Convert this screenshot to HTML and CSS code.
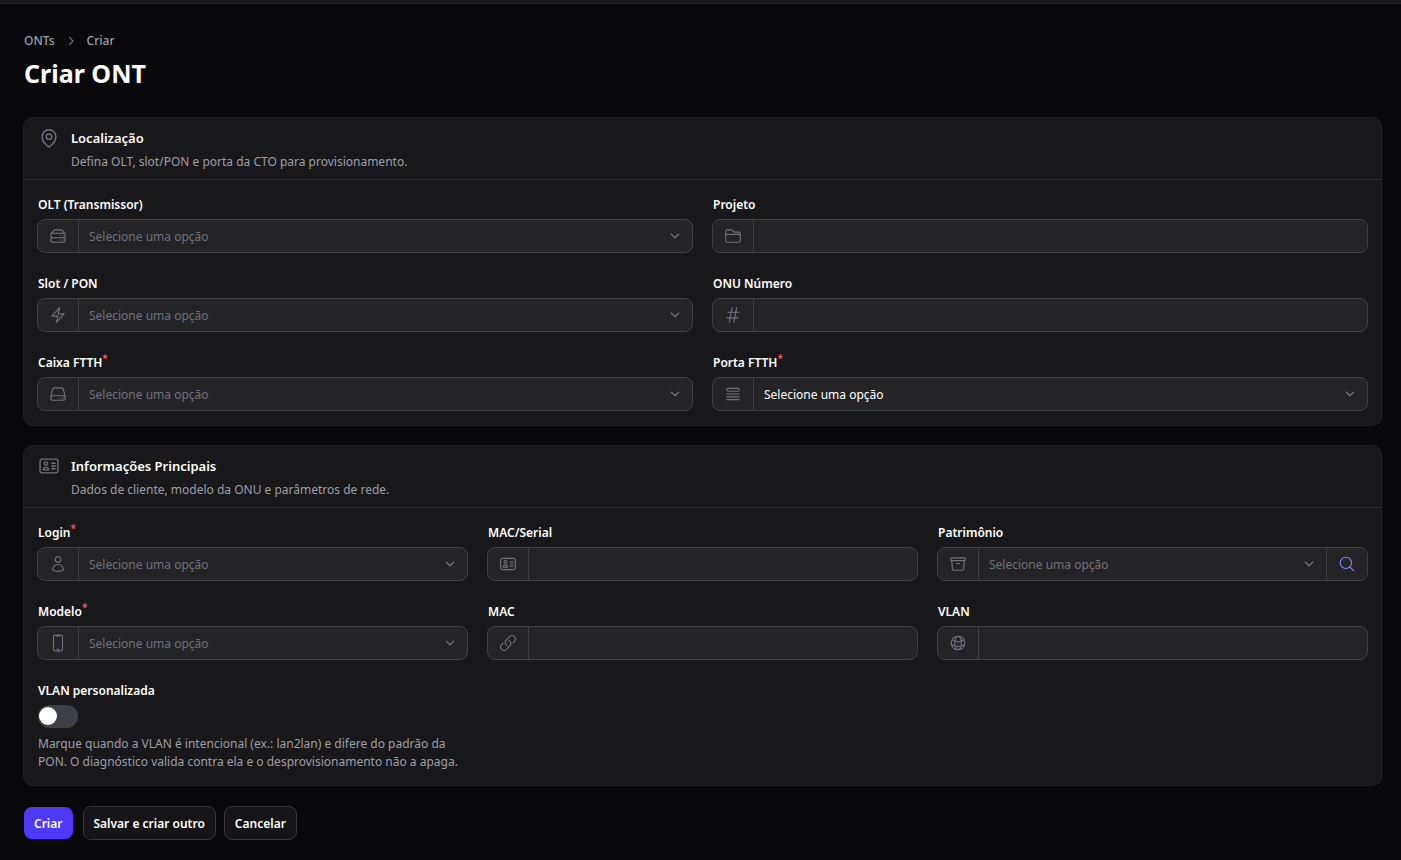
FILE: index.html
```
<!doctype html>
<html lang="pt-BR">
<head>
<meta charset="utf-8">
<meta name="viewport" content="width=device-width,initial-scale=1">
<title>Criar ONT</title>
<link rel="stylesheet" href="styles.css">
</head>
<body>
<div class="topbar"></div>
<main class="page">
  <header class="page-header">
    <nav class="breadcrumbs">
      <a href="#">ONTs</a>
      <svg class="icon icon-sep" viewBox="0 0 20 20"><path d="m8 5.500 4.500 4.500-4.500 4.500"/></svg>
      <a href="#">Criar</a>
    </nav>
    <h1>Criar ONT</h1>
  </header>

  <form id="form-ont">
    <section class="card">
      <header class="card-header">
        <svg class="icon icon-lg" viewBox="0 0 24 24"><path d="M15 10.5a3 3 0 1 1-6 0 3 3 0 0 1 6 0Z"/><path d="M19.5 10.5c0 7.142-7.5 11.25-7.5 11.25S4.5 17.642 4.5 10.5a7.5 7.5 0 1 1 15 0Z"/></svg>
        <div>
          <h2>Localização</h2>
          <p>Defina OLT, slot/PON e porta da CTO para provisionamento.</p>
        </div>
      </header>
      <div class="card-body cols-2">
        <div class="field">
          <label for="olt">OLT (Transmissor)</label>
          <div class="control">
            <span class="prefix"><svg class="icon" viewBox="0 0 24 24"><path d="M5.25 14.25h13.5m-13.5 0a3 3 0 0 1-3-3m3 3a3 3 0 1 0 0 6h13.5a3 3 0 1 0 0-6m-16.5-3a3 3 0 0 1 3-3h13.5a3 3 0 0 1 3 3m-19.5 0a4.5 4.5 0 0 1 .9-2.7L5.737 5.1a3.375 3.375 0 0 1 2.7-1.35h7.126c1.062 0 2.062.5 2.7 1.35l2.587 3.45a4.5 4.5 0 0 1 .9 2.7m0 0a3 3 0 0 1-3 3m0 3h.008v.008h-.008v-.008Zm0-6h.008v.008h-.008v-.008Zm-3 6h.008v.008h-.008v-.008Zm0-6h.008v.008h-.008v-.008Z"/></svg></span>
            <select id="olt" class="empty"><option>Selecione uma opção</option></select>
          </div>
        </div>
        <div class="field">
          <label for="projeto">Projeto</label>
          <div class="control">
            <span class="prefix"><svg class="icon" viewBox="0 0 24 24"><path d="M2.25 12.75V12A2.25 2.25 0 0 1 4.5 9.75h15A2.25 2.25 0 0 1 21.75 12v.75m-8.69-6.44-2.12-2.12a1.5 1.5 0 0 0-1.061-.44H4.5A2.25 2.25 0 0 0 2.25 6v12a2.25 2.25 0 0 0 2.25 2.25h15A2.25 2.25 0 0 0 21.75 18V9a2.25 2.25 0 0 0-2.25-2.25h-5.379a1.5 1.5 0 0 1-1.06-.44Z"/></svg></span>
            <input type="text" id="projeto">
          </div>
        </div>
        <div class="field">
          <label for="slot">Slot / PON</label>
          <div class="control">
            <span class="prefix"><svg class="icon" viewBox="0 0 24 24"><path d="m3.75 13.5 10.5-11.25L12 10.5h8.25L9.75 21.75 12 13.5H3.75Z"/></svg></span>
            <select id="slot" class="empty"><option>Selecione uma opção</option></select>
          </div>
        </div>
        <div class="field">
          <label for="onu">ONU Número</label>
          <div class="control">
            <span class="prefix"><svg class="icon" viewBox="0 0 24 24"><path d="M5.25 8.25h15m-16.5 7.5h15m-1.8-13.5-3.9 19.5m-2.1-19.5-3.9 19.5"/></svg></span>
            <input type="text" id="onu">
          </div>
        </div>
        <div class="field">
          <label for="caixa">Caixa FTTH<sup>*</sup></label>
          <div class="control">
            <span class="prefix"><svg class="icon" viewBox="0 0 24 24"><path d="M21.75 17.25v-.228a4.5 4.5 0 0 0-.12-1.03l-2.268-9.64a3.375 3.375 0 0 0-3.285-2.602H7.923a3.375 3.375 0 0 0-3.285 2.602l-2.268 9.64a4.5 4.5 0 0 0-.12 1.03v.228m19.5 0a3 3 0 0 1-3 3H5.25a3 3 0 0 1-3-3m19.5 0a3 3 0 0 0-3-3H5.25a3 3 0 0 0-3 3m16.5 0h.008v.008h-.008v-.008Zm-3 0h.008v.008h-.008v-.008Z"/></svg></span>
            <select id="caixa" class="empty"><option>Selecione uma opção</option></select>
          </div>
        </div>
        <div class="field">
          <label for="porta">Porta FTTH<sup>*</sup></label>
          <div class="control">
            <span class="prefix"><svg class="icon" viewBox="0 0 24 24"><path d="M3.75 12h16.5m-16.5 3.75h16.5M3.75 19.5h16.5M5.625 4.5h12.75a1.875 1.875 0 0 1 0 3.75H5.625a1.875 1.875 0 0 1 0-3.75Z"/></svg></span>
            <select id="porta"><option>Selecione uma opção</option></select>
          </div>
        </div>
      </div>
    </section>

    <section class="card">
      <header class="card-header">
        <svg class="icon icon-lg" viewBox="0 0 24 24"><path d="M15 9h3.75M15 12h3.75M15 15h3.75M4.5 19.5h15a2.25 2.25 0 0 0 2.25-2.25V6.75A2.25 2.25 0 0 0 19.5 4.5h-15a2.25 2.25 0 0 0-2.25 2.25v10.5A2.25 2.25 0 0 0 4.5 19.5Zm6-10.125a1.875 1.875 0 1 1-3.75 0 1.875 1.875 0 0 1 3.75 0Zm1.294 6.336a6.721 6.721 0 0 1-3.17.789 6.721 6.721 0 0 1-3.168-.789 3.376 3.376 0 0 1 6.338 0Z"/></svg>
        <div>
          <h2>Informações Principais</h2>
          <p>Dados de cliente, modelo da ONU e parâmetros de rede.</p>
        </div>
      </header>
      <div class="card-body cols-3">
        <div class="field">
          <label for="login">Login<sup>*</sup></label>
          <div class="control">
            <span class="prefix"><svg class="icon" viewBox="0 0 24 24"><path d="M15.75 6a3.75 3.75 0 1 1-7.5 0 3.75 3.75 0 0 1 7.5 0ZM4.501 20.118a7.5 7.5 0 0 1 14.998 0A17.933 17.933 0 0 1 12 21.75c-2.676 0-5.216-.584-7.499-1.632Z"/></svg></span>
            <select id="login" class="empty"><option>Selecione uma opção</option></select>
          </div>
        </div>
        <div class="field">
          <label for="serial">MAC/Serial</label>
          <div class="control">
            <span class="prefix"><svg class="icon" viewBox="0 0 24 24"><path d="M15 9h3.75M15 12h3.75M15 15h3.75M4.5 19.5h15a2.25 2.25 0 0 0 2.25-2.25V6.75A2.25 2.25 0 0 0 19.5 4.5h-15a2.25 2.25 0 0 0-2.25 2.25v10.5A2.25 2.25 0 0 0 4.5 19.5Zm6-10.125a1.875 1.875 0 1 1-3.75 0 1.875 1.875 0 0 1 3.75 0Zm1.294 6.336a6.721 6.721 0 0 1-3.17.789 6.721 6.721 0 0 1-3.168-.789 3.376 3.376 0 0 1 6.338 0Z"/></svg></span>
            <input type="text" id="serial">
          </div>
        </div>
        <div class="field">
          <label for="patrimonio">Patrimônio</label>
          <div class="control">
            <span class="prefix"><svg class="icon" viewBox="0 0 24 24"><path d="m20.25 7.5-.625 10.632a2.25 2.25 0 0 1-2.247 2.118H6.622a2.25 2.25 0 0 1-2.247-2.118L3.75 7.5M10 11.25h4M3.375 7.5h17.25c.621 0 1.125-.504 1.125-1.125v-1.5c0-.621-.504-1.125-1.125-1.125H3.375c-.621 0-1.125.504-1.125 1.125v1.5c0 .621.504 1.125 1.125 1.125Z"/></svg></span>
            <select id="patrimonio" class="empty"><option>Selecione uma opção</option></select>
            <button type="button" class="suffix" aria-label="Buscar"><svg class="icon" viewBox="0 0 24 24"><path d="m21 21-5.197-5.197m0 0A7.5 7.5 0 1 0 5.196 5.196a7.5 7.5 0 0 0 10.607 10.607Z"/></svg></button>
          </div>
        </div>
        <div class="field">
          <label for="modelo">Modelo<sup>*</sup></label>
          <div class="control">
            <span class="prefix"><svg class="icon" viewBox="0 0 24 24"><path d="M10.5 1.5H8.25A2.25 2.25 0 0 0 6 3.75v16.5a2.25 2.25 0 0 0 2.25 2.25h7.5A2.25 2.25 0 0 0 18 20.25V3.75a2.25 2.25 0 0 0-2.25-2.25H13.5m-3 0V3h3V1.5m-3 0h3m-3 18.75h3"/></svg></span>
            <select id="modelo" class="empty"><option>Selecione uma opção</option></select>
          </div>
        </div>
        <div class="field">
          <label for="mac">MAC</label>
          <div class="control">
            <span class="prefix"><svg class="icon" viewBox="0 0 24 24"><path d="M13.19 8.688a4.5 4.5 0 0 1 1.242 7.244l-4.5 4.5a4.5 4.5 0 0 1-6.364-6.364l1.757-1.757m13.35-.622 1.757-1.757a4.5 4.5 0 0 0-6.364-6.364l-4.5 4.5a4.5 4.5 0 0 0 1.242 7.244"/></svg></span>
            <input type="text" id="mac">
          </div>
        </div>
        <div class="field">
          <label for="vlan">VLAN</label>
          <div class="control">
            <span class="prefix"><svg class="icon" viewBox="0 0 24 24"><path d="M12 21a9.004 9.004 0 0 0 8.716-6.747M12 21a9.004 9.004 0 0 1-8.716-6.747M12 21c2.485 0 4.5-4.03 4.5-9S14.485 3 12 3m0 18c-2.485 0-4.5-4.03-4.5-9S9.515 3 12 3m0 0a8.997 8.997 0 0 1 7.843 4.582M12 3a8.997 8.997 0 0 0-7.843 4.582m15.686 0A11.953 11.953 0 0 1 12 10.5c-2.998 0-5.74-1.1-7.843-2.918m15.686 0A8.959 8.959 0 0 1 21 12c0 .778-.099 1.533-.284 2.253m0 0A17.919 17.919 0 0 1 12 16.5c-3.162 0-6.133-.815-8.716-2.247m0 0A9.015 9.015 0 0 1 3 12c0-1.605.42-3.113 1.157-4.418"/></svg></span>
            <input type="text" id="vlan">
          </div>
        </div>
        <div class="field">
          <label for="vlan-custom">VLAN personalizada</label>
          <input type="checkbox" id="vlan-custom" class="toggle" role="switch">
          <p class="help">Marque quando a VLAN é intencional (ex.: lan2lan) e difere do padrão da PON. O diagnóstico valida contra ela e o desprovisionamento não a apaga.</p>
        </div>
      </div>
    </section>

    <div class="actions">
      <button type="submit" class="btn btn-primary">Criar</button>
      <button type="button" class="btn">Salvar e criar outro</button>
      <button type="button" class="btn">Cancelar</button>
    </div>
  </form>
</main>
</body>
</html>
```
FILE: styles.css
```
* {
  box-sizing: border-box;
}
body {
  margin: 0;
  background: #09090b;
  color: #fff;
  font-family: "Segoe UI", "Noto Sans", sans-serif;
  font-size: 13px;
  line-height: 18px;
}
h1, h2, p {
  margin: 0;
}
.topbar {
  height: 4px;
  background: #18181b;
  border-bottom: 1px solid #242427;
}
.page {
  padding: 28px 19px 20px 23px;
}
.page-header {
  padding-left: 1px;
  margin-bottom: 27px;
}
.breadcrumbs {
  display: flex;
  align-items: center;
  gap: 8px;
  margin-bottom: 7px;
}
.breadcrumbs a {
  color: #9f9fa9;
  font-size: 12px;
  font-weight: 500;
  text-decoration: none;
}
h1 {
  font-size: 25px;
  line-height: 33px;
  font-weight: 700;
}

/* icons */
.icon {
  display: block;
  flex: none;
  width: 18px;
  height: 18px;
  fill: none;
  stroke: #71717b;
  stroke-width: 1.5;
  stroke-linecap: round;
  stroke-linejoin: round;
}
.icon-lg {
  width: 22px;
  height: 22px;
}
.icon-sep {
  width: 16px;
  height: 16px;
}

/* cards */
.card {
  margin-bottom: 19px;
  background: #18181b;
  border: 1px solid #212124;
  border-radius: 10px;
}
.card-header {
  display: flex;
  gap: 11px;
  padding: 9px 14px 8px;
  border-bottom: 1px solid #2d2d30;
}
.card-header h2 {
  padding-top: 1px;
  font-size: 13px;
  line-height: 20px;
  font-weight: 600;
  margin-bottom: 5px;
}
.card-header p,
.help {
  color: #9f9fa9;
  font-size: 12px;
}
.card-body {
  display: grid;
  gap: 20px 19px;
  padding: 14px 13px;
}
.cols-2 {
  grid-template-columns: repeat(2, minmax(0, 1fr));
}
.cols-3 {
  grid-template-columns: repeat(3, minmax(0, 1fr));
}

/* fields */
.field {
  display: flex;
  flex-direction: column;
  gap: 5px;
}
.field label {
  padding: 2px 0 0 1px;
  font-size: 12px;
  font-weight: 600;
}
sup {
  color: #ff6467;
  font-size: 10px;
  line-height: 0;
  font-weight: 500;
}
.control {
  display: flex;
  height: 34px;
  background: #242427;
  border: 1px solid #414144;
  border-radius: 8px;
  overflow: hidden;
}
.control:focus-within {
  border-color: #7c86ff;
}
.prefix,
.suffix {
  display: flex;
  align-items: center;
  justify-content: center;
  flex: none;
  width: 41px;
}
.prefix {
  border-right: 1px solid #414144;
}
.suffix {
  padding: 0;
  background: none;
  border: 0;
  border-left: 1px solid #414144;
  cursor: pointer;
}
.suffix .icon {
  stroke: #7c86ff;
}
.control input,
.control select {
  flex: 1;
  min-width: 0;
  padding: 2px 10px 0;
  background: transparent;
  border: 0;
  outline: 0;
  color: #fff;
  font: inherit;
  font-size: 12px;
}
.control select {
  appearance: none;
  padding-right: 30px;
  background: url("data:image/svg+xml,%3Csvg xmlns='http://www.w3.org/2000/svg' fill='none' viewBox='0 0 20 20'%3E%3Cpath stroke='%236b7280' stroke-linecap='round' stroke-linejoin='round' stroke-width='1.5' d='m6 8 4 4 4-4'/%3E%3C/svg%3E") no-repeat right 8px center / 18px 18px;
}
.control select.empty {
  color: #71717b;
}
.control option {
  background: #18181b;
}
.toggle {
  appearance: none;
  width: 40px;
  height: 23px;
  margin: 0 1px;
  padding: 2px 1px;
  background: #3f3f46;
  border-radius: 12px;
  cursor: pointer;
}
.toggle::before {
  content: "";
  display: block;
  width: 18px;
  height: 18px;
  background: #fff;
  border-radius: 50%;
}
.toggle:checked {
  background: #4f39f6;
}
.toggle:checked::before {
  margin-left: auto;
}
.help {
  padding: 2px 0 0 1px;
}

/* buttons */
.actions {
  display: flex;
  align-items: center;
  gap: 8px;
  padding: 1px;
}
.btn {
  height: 34px;
  padding: 2px 10px 0;
  background: #151517;
  border: 1px solid #38383a;
  border-radius: 8px;
  color: #fff;
  font: inherit;
  font-size: 12px;
  font-weight: 600;
  cursor: pointer;
}
.btn-primary {
  height: 32px;
  margin-right: 2px;
  background: #4f39f6;
  border: 0;
}
```
